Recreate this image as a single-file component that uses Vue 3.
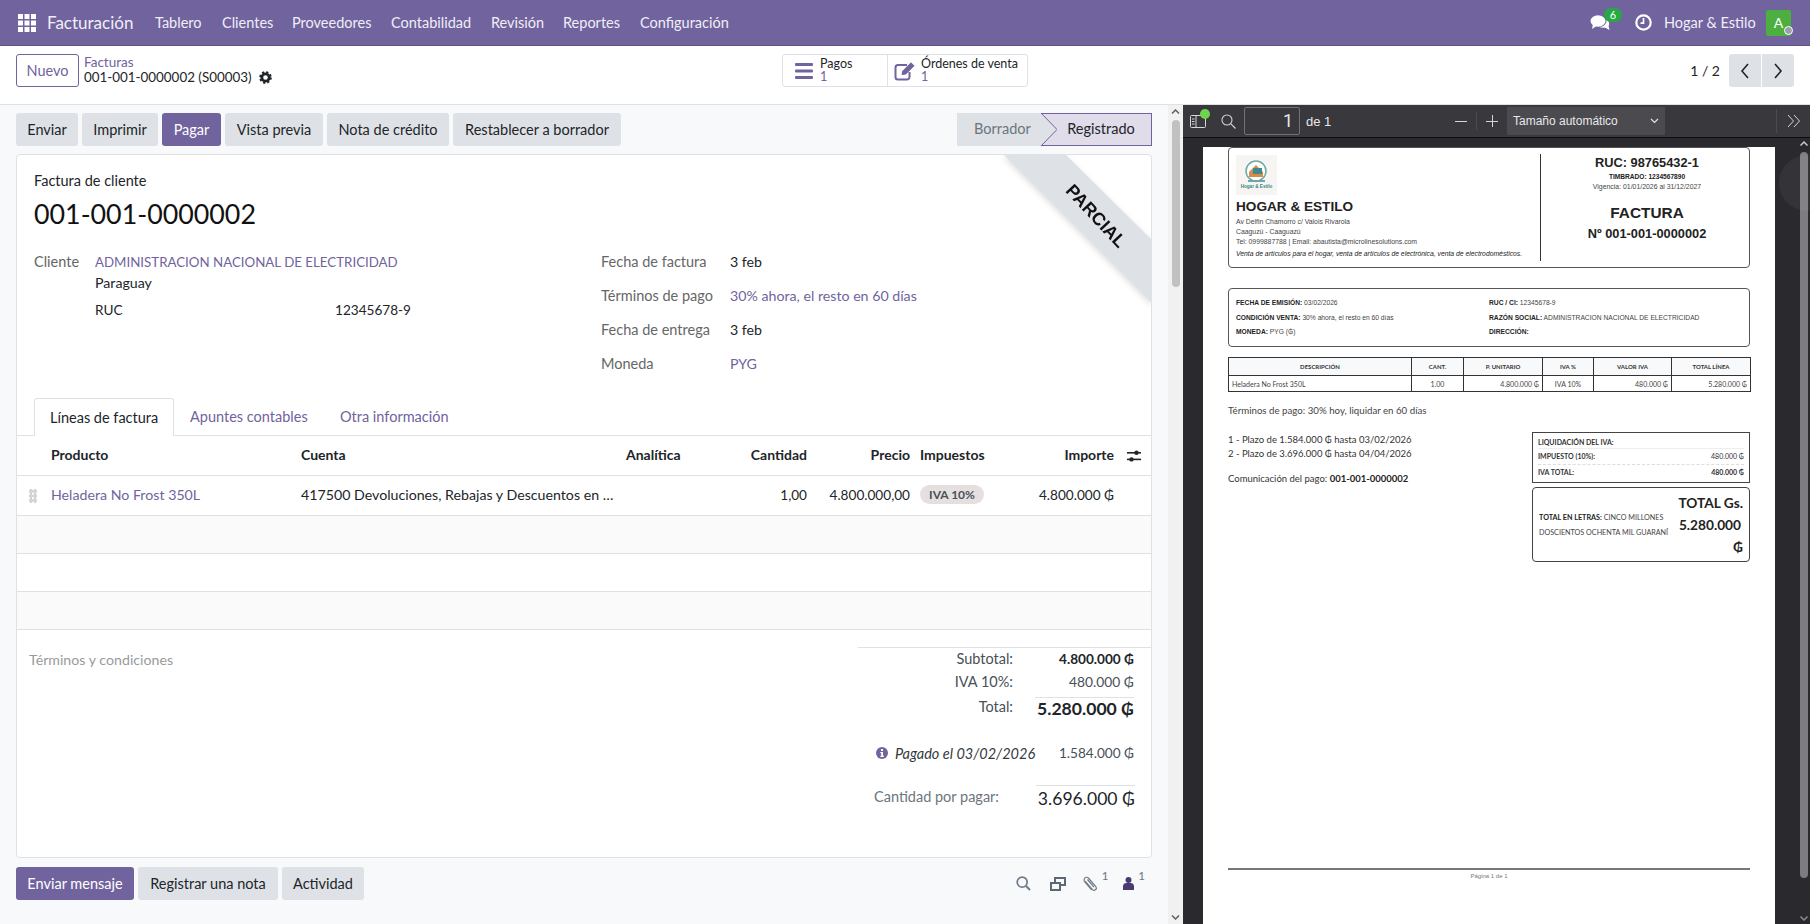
<script setup>
const menus = ['Tablero', 'Clientes', 'Proveedores', 'Contabilidad', 'Revisión', 'Reportes', 'Configuración']
const actions = [
  { label: 'Enviar', w: 62 },
  { label: 'Imprimir', w: 76 },
  { label: 'Pagar', w: 59, primary: true },
  { label: 'Vista previa', w: 98 },
  { label: 'Nota de crédito', w: 122 },
  { label: 'Restablecer a borrador', w: 168 },
]
const infoRows = [
  { label: 'Fecha de factura', value: '3 feb' },
  { label: 'Términos de pago', value: '30% ahora, el resto en 60 días', link: true },
  { label: 'Fecha de entrega', value: '3 feb' },
  { label: 'Moneda', value: 'PYG', link: true },
]
</script>

<template>
  <div class="app">
    <header class="navbar">
      <svg class="apps" width="18" height="18" viewBox="0 0 18 18" fill="#fff">
        <rect x="0" y="0" width="5" height="5" /><rect x="6.5" y="0" width="5" height="5" /><rect x="13" y="0" width="5" height="5" />
        <rect x="0" y="6.5" width="5" height="5" /><rect x="6.5" y="6.5" width="5" height="5" /><rect x="13" y="6.5" width="5" height="5" />
        <rect x="0" y="13" width="5" height="5" /><rect x="6.5" y="13" width="5" height="5" /><rect x="13" y="13" width="5" height="5" />
      </svg>
      <span class="brand">Facturación</span>
      <nav class="menu">
        <a v-for="m in menus" :key="m">{{ m }}</a>
      </nav>
      <div class="systray">
        <span class="chat">
          <svg width="20" height="18" viewBox="0 0 20 18" fill="#fff">
            <ellipse cx="8" cy="7" rx="7.5" ry="5.8" />
            <path d="M3 10 L2 15 L8 11 Z" />
            <path d="M16.5 5.5 C19 7 20 9.5 18.6 12 L19.5 16 L15 13.6 C13 14 11 13.8 9.5 13 C13.5 13 17 10 16.5 5.5 Z" />
          </svg>
          <b class="count">6</b>
        </span>
        <svg class="clock" width="17" height="17" viewBox="0 0 17 17" fill="none" stroke="#fff">
          <circle cx="8.5" cy="8.5" r="7.2" stroke-width="2.2" />
          <path d="M8.5 4 V9.2 H5.5" stroke-width="1.7" />
        </svg>
        <span class="company">Hogar &amp; Estilo</span>
        <span class="avatar">A<i class="presence"></i></span>
      </div>
    </header>

    <section class="control">
      <button class="btn-new">Nuevo</button>
      <div class="crumbs">
        <a>Facturas</a>
        <div class="crumb-current">
          001-001-0000002 (S00003)
          <svg width="13" height="13" viewBox="0 0 14 14">
            <circle cx="7" cy="7" r="4" fill="none" stroke="#212529" stroke-width="3" />
            <circle cx="7" cy="7" r="5.8" fill="none" stroke="#212529" stroke-width="2" stroke-dasharray="2.4 2.16" />
          </svg>
        </div>
      </div>
      <div class="stats">
        <div class="stat stat-pay">
          <svg width="18" height="16" viewBox="0 0 18 16" fill="#71639e">
            <rect width="18" height="3" rx="1" /><rect y="6.5" width="18" height="3" rx="1" /><rect y="13" width="18" height="3" rx="1" />
          </svg>
          <div class="stat-text"><span>Pagos</span><em>1</em></div>
        </div>
        <div class="stat stat-order">
          <svg width="22" height="20" viewBox="0 0 22 20" fill="none" stroke="#71639e">
            <path d="M13 4 H4 A2.5 2.5 0 0 0 1.5 6.5 V16 A2.5 2.5 0 0 0 4 18.5 H13 A2.5 2.5 0 0 0 15.5 16 V11" stroke-width="2" />
            <path d="M8 13.5 L8.8 10 L17 1.8 L20 4.8 L11.8 13 Z" fill="#71639e" stroke-width="1" />
          </svg>
          <div class="stat-text"><span>Órdenes de venta</span><em>1</em></div>
        </div>
      </div>
      <div class="pager">
        <span class="pager-count">1 / 2</span>
        <button class="pager-btn">
          <svg width="10" height="16" viewBox="0 0 10 16" fill="none" stroke="#212529" stroke-width="1.6"><path d="M8 1 L2 8 L8 15" /></svg>
        </button>
        <button class="pager-btn">
          <svg width="10" height="16" viewBox="0 0 10 16" fill="none" stroke="#212529" stroke-width="1.6"><path d="M2 1 L8 8 L2 15" /></svg>
        </button>
      </div>
    </section>

    <main class="workspace">
      <div class="form-pane">
        <div class="action-row">
          <div class="actions">
            <button
              v-for="a in actions"
              :key="a.label"
              class="btn"
              :class="{ primary: a.primary }"
              :style="{ width: a.w + 'px' }"
            >{{ a.label }}</button>
          </div>
          <div class="statusbar">
            <span class="status-off">Borrador</span>
            <svg class="status-arrow" width="16" height="33" viewBox="0 0 16 33">
              <path d="M0 0 L16 16.5 L0 33 H16 V0 Z" fill="#e0dcea" />
              <path d="M0 0 L16 16.5 L0 33" fill="none" stroke="#71639e" />
              <path d="M0 .5 H16 M0 32.5 H16" stroke="#71639e" />
            </svg>
            <span class="status-on">Registrado</span>
          </div>
        </div>

        <article class="card">
          <div class="ribbon"><div class="ribbon-band"><span>PARCIAL</span></div></div>
          <div class="kind">Factura de cliente</div>
          <h1 class="number">001-001-0000002</h1>

          <div class="info">
            <div class="info-left">
              <div class="field-label">Cliente</div>
              <div class="partner">
                <a>ADMINISTRACION NACIONAL DE ELECTRICIDAD</a>
                <div>Paraguay</div>
                <div class="ruc"><span>RUC</span><span>12345678-9</span></div>
              </div>
            </div>
            <div class="info-right">
              <div v-for="r in infoRows" :key="r.label" class="info-row">
                <span class="field-label">{{ r.label }}</span>
                <a v-if="r.link">{{ r.value }}</a>
                <span v-else>{{ r.value }}</span>
              </div>
            </div>
          </div>

          <div class="tabs">
            <a class="tab active">Líneas de factura</a>
            <a class="tab">Apuntes contables</a>
            <a class="tab">Otra información</a>
          </div>

          <div class="grid-row grid-head">
            <span>Producto</span>
            <span>Cuenta</span>
            <span>Analítica</span>
            <span class="num">Cantidad</span>
            <span class="num">Precio</span>
            <span class="tax">Impuestos</span>
            <span class="num">Importe</span>
            <svg class="optional" width="14" height="14" viewBox="0 0 14 14" fill="#212529">
              <rect y="3" width="14" height="1.6" /><circle cx="9.5" cy="3.8" r="2.2" />
              <rect y="9.6" width="14" height="1.6" /><circle cx="4.5" cy="10.4" r="2.2" />
            </svg>
          </div>
          <div class="grid-row grid-line">
            <i class="handle"></i>
            <a>Heladera No Frost 350L</a>
            <span class="account">417500 Devoluciones, Rebajas y Descuentos en …</span>
            <span></span>
            <span class="num">1,00</span>
            <span class="num">4.800.000,00</span>
            <span class="tax"><b class="badge">IVA 10%</b></span>
            <span class="num">4.800.000 ₲</span>
          </div>
          <div class="empty-row odd"></div>
          <div class="empty-row"></div>
          <div class="empty-row odd"></div>

          <div class="bottom">
            <div class="terms">Términos y condiciones</div>
            <div class="totals">
              <div class="total-row"><span>Subtotal:</span><b>4.800.000 ₲</b></div>
              <div class="total-row"><span>IVA 10%:</span><span class="amount">480.000 ₲</span></div>
              <div class="total-row grand"><span>Total:</span><b>5.280.000 ₲</b></div>
              <div class="paid">
                <svg width="12" height="12" viewBox="0 0 12 12">
                  <circle cx="6" cy="6" r="6" fill="#71639e" />
                  <rect x="5" y="2" width="2" height="2" fill="#fff" />
                  <path d="M4.4 5 H7 V8.8 H7.8 V10 H4.4 V8.8 H5.2 V6.2 H4.4 Z" fill="#fff" />
                </svg>
                <em>Pagado el 03/02/2026</em>
                <span>1.584.000 ₲</span>
              </div>
              <div class="due">
                <span>Cantidad por pagar:</span>
                <strong>3.696.000 ₲</strong>
              </div>
            </div>
          </div>
        </article>

        <div class="chatter">
          <button class="btn primary chat-send">Enviar mensaje</button>
          <button class="btn chat-note">Registrar una nota</button>
          <button class="btn chat-act">Actividad</button>
          <div class="chatter-tools">
            <svg class="tool-search" width="15" height="15" viewBox="0 0 15 15" fill="none" stroke="#6c7a89" stroke-width="1.7">
              <circle cx="6.2" cy="6.2" r="5" /><path d="M10 10 L14 14" stroke-width="2" />
            </svg>
            <svg class="tool-copy" width="16" height="14" viewBox="0 0 16 14" fill="none" stroke="#5c6878" stroke-width="2">
              <rect x="1" y="6" width="9" height="7" /><path d="M5 5 V1 H15 V8 H11" />
            </svg>
            <svg class="tool-clip" width="16" height="16" viewBox="0 0 16 16" fill="none" stroke="#6f7b8a" stroke-width="1.2">
              <path d="M3.2 5.2 L10.4 13.6 A2.3 2.3 0 0 0 14 10.8 L6.4 2 A2.5 2.5 0 0 0 2.4 2.6 A2.6 2.6 0 0 0 2.6 5.6 L9.6 13.8" />
              <path d="M5.5 3.5 L12 11.2" />
            </svg>
            <sup>1</sup>
            <svg class="tool-user" width="11" height="13" viewBox="0 0 11 13" fill="#4a3b74">
              <circle cx="5.5" cy="3" r="3" /><path d="M0 13 V9 A3.5 3.5 0 0 1 3.5 6 H7.5 A3.5 3.5 0 0 1 11 9 V13 Z" />
            </svg>
            <sup>1</sup>
          </div>
        </div>
      </div>

      <div class="pane-scroll">
        <svg width="9" height="5" viewBox="0 0 9 5" fill="none" stroke="#606060" stroke-width="1.5"><path d="M1 4.5 L4.5 1 L8 4.5" /></svg>
        <i class="pane-thumb"></i>
        <svg class="pane-down" width="9" height="5" viewBox="0 0 9 5" fill="none" stroke="#606060" stroke-width="1.5"><path d="M1 .5 L4.5 4 L8 .5" /></svg>
      </div>

      <aside class="viewer">
        <div class="pdf-tools">
          <span class="pdf-side">
            <svg width="16" height="16" viewBox="0 0 16 16" fill="none" stroke="#d6d6d8">
              <rect x=".5" y="2.5" width="15" height="12" rx="1" /><path d="M6 2.5 V14.5 M2 6 H4.5 M2 8.5 H4.5 M2 11 H4.5" />
            </svg>
            <i class="pdf-dot"></i>
          </span>
          <svg class="pdf-search" width="15" height="15" viewBox="0 0 15 15" fill="none" stroke="#d6d6d8" stroke-width="1.1">
            <circle cx="6" cy="6" r="5" /><path d="M9.6 9.6 L14.5 14.5" />
          </svg>
          <span class="pdf-page">1</span>
          <span class="pdf-of">de 1</span>
          <svg class="pdf-minus" width="12" height="12" viewBox="0 0 12 12" stroke="#d6d6d8"><path d="M0 6.5 H12" /></svg>
          <i class="pdf-sep"></i>
          <svg class="pdf-plus" width="12" height="12" viewBox="0 0 12 12" stroke="#d6d6d8"><path d="M0 6.5 H12 M6.5 0 V12" /></svg>
          <span class="pdf-zoom">
            Tamaño automático
            <svg width="9" height="6" viewBox="0 0 9 6" fill="none" stroke="#e4e4e6" stroke-width="1.2"><path d="M1 1 L4.5 4.5 L8 1" /></svg>
          </span>
          <i class="pdf-sep2"></i>
          <svg class="pdf-more" width="14" height="14" viewBox="0 0 14 14" fill="none" stroke="#d6d6d8"><path d="M1 1 L6.5 7 L1 13 M7 1 L12.5 7 L7 13" /></svg>
        </div>

        <div class="pdf-body">
          <div class="sheet">
            <div class="doc-head">
              <div class="doc-company">
                <svg class="logo" width="41" height="40" viewBox="0 0 41 40">
                  <rect width="41" height="40" fill="#f7f5f2" />
                  <circle cx="20" cy="16" r="10" fill="#fff" stroke="#6da8a6" stroke-width="1.5" />
                  <path d="M13 17 L20 10 L27 17 V22 H13 Z" fill="#d98a4d" />
                  <rect x="17" y="13" width="9" height="6" fill="#3f8a8c" />
                  <rect x="12" y="25" width="17" height="2" fill="#6da8a6" />
                  <text x="20.5" y="33" font-size="4.6" font-weight="700" text-anchor="middle" fill="#38858a" font-family="Liberation Sans">Hogar &amp; Estilo</text>
                </svg>
                <div class="doc-name">HOGAR &amp; ESTILO</div>
                <div class="doc-line first">Av Delfin Chamorro c/ Valois Rivarola</div>
                <div class="doc-line">Caaguzú - Caaguazú</div>
                <div class="doc-line">Tel: 0999887788 | Email: abautista@microlinesolutions.com</div>
                <div class="doc-slogan">Venta de artículos para el hogar, venta de artículos de electrónica, venta de electrodomésticos.</div>
              </div>
              <div class="doc-fiscal">
                <div class="doc-ruc">RUC: 98765432-1</div>
                <div class="doc-timbrado">TIMBRADO: 1234567890</div>
                <div class="doc-vigencia">Vigencia: 01/01/2026 al 31/12/2027</div>
                <div class="doc-title">FACTURA</div>
                <div class="doc-no">Nº 001-001-0000002</div>
              </div>
            </div>

            <div class="doc-client">
              <div><b>FECHA DE EMISIÓN:</b> 03/02/2026</div>
              <div><b>RUC / CI:</b> 12345678-9</div>
              <div><b>CONDICIÓN VENTA:</b> 30% ahora, el resto en 60 días</div>
              <div><b>RAZÓN SOCIAL:</b> ADMINISTRACION NACIONAL DE ELECTRICIDAD</div>
              <div><b>MONEDA:</b> PYG (₲)</div>
              <div><b>DIRECCIÓN:</b></div>
            </div>

            <table class="doc-table">
              <colgroup>
                <col style="width: 183px" /><col style="width: 52px" /><col style="width: 79px" />
                <col style="width: 51px" /><col style="width: 78px" /><col style="width: 79px" />
              </colgroup>
              <thead>
                <tr><th>DESCRIPCIÓN</th><th>CANT.</th><th>P. UNITARIO</th><th>IVA %</th><th>VALOR IVA</th><th>TOTAL LÍNEA</th></tr>
              </thead>
              <tbody>
                <tr>
                  <td>Heladera No Frost 350L</td>
                  <td class="c">1.00</td>
                  <td class="r">4.800.000 ₲</td>
                  <td class="c">IVA 10%</td>
                  <td class="r">480.000 ₲</td>
                  <td class="r">5.280.000 ₲</td>
                </tr>
              </tbody>
            </table>

            <p class="doc-terms">Términos de pago: 30% hoy, liquidar en 60 días</p>

            <div class="doc-bottom">
              <div class="doc-plan">
                <div>1 - Plazo de 1.584.000 ₲ hasta 03/02/2026</div>
                <div>2 - Plazo de 3.696.000 ₲ hasta 04/04/2026</div>
                <div class="doc-comm">Comunicación del pago: <b>001-001-0000002</b></div>
              </div>
              <div class="doc-sums">
                <div class="doc-tax">
                  <div class="tax-head">LIQUIDACIÓN DEL IVA:</div>
                  <div class="tax-row dashed"><b>IMPUESTO (10%):</b><span>480.000 ₲</span></div>
                  <div class="tax-row"><b>IVA TOTAL:</b><b>480.000 ₲</b></div>
                </div>
                <div class="doc-total">
                  <div class="words"><b>TOTAL EN LETRAS:</b> CINCO MILLONES DOSCIENTOS OCHENTA MIL GUARANÍ</div>
                  <div class="big">
                    <div>TOTAL Gs.</div>
                    <div>5.280.000</div>
                    <div>₲</div>
                  </div>
                </div>
              </div>
            </div>

            <div class="doc-foot">Página 1 de 1</div>
          </div>

          <div class="pdf-scroll">
            <svg width="8" height="5" viewBox="0 0 8 5" fill="none" stroke="#c8c8c8" stroke-width="1.5"><path d="M.5 4.5 L4 1 L7.5 4.5" /></svg>
            <i class="pdf-thumb"></i>
            <svg class="pdf-down" width="8" height="5" viewBox="0 0 8 5" fill="none" stroke="#8a8a8a" stroke-width="1.5"><path d="M.5 .5 L4 4 L7.5 .5" /></svg>
          </div>
          <div class="floating"></div>
        </div>
      </aside>
    </main>
  </div>
</template>

<style>
html, body { margin: 0; background: #f8f9fa; }
</style>

<style scoped>
.app {
  width: 1810px;
  height: 924px;
  overflow: hidden;
  display: flex;
  flex-direction: column;
  font-family: "Lato", "DejaVu Sans", sans-serif;
  font-size: 14.5px;
  color: #212529;
  background: #f8f9fa;
}
a { color: #71639e; }
button { font: inherit; border: 0; padding: 0; color: inherit; }

/* navbar */
.navbar {
  height: 46px;
  flex: none;
  display: flex;
  align-items: center;
  background: #71639e;
  color: #fff;
  border-bottom: 1px solid #5f5388;
  box-sizing: border-box;
}
.apps { margin-left: 18px; }
.brand { margin-left: 11px; width: 108px; font-size: 17px; color: #f0eef6; }
.menu { display: flex; }
.menu a { color: #f0eef6; margin-right: 20px; }
.menu a:nth-child(1) { width: 47px; }
.menu a:nth-child(2) { width: 50px; }
.menu a:nth-child(3) { width: 80px; margin-right: 19px; }
.menu a:nth-child(4) { width: 80px; }
.menu a:nth-child(5) { width: 52px; }
.menu a:nth-child(6) { width: 57px; }
.systray { margin-left: auto; display: flex; align-items: center; padding-right: 19px; }
.chat { position: relative; width: 45px; display: flex; }
.count {
  position: absolute;
  left: 14px;
  top: -6px;
  width: 18px;
  height: 14px;
  border-radius: 7px;
  background: #28a745;
  font-size: 11px;
  font-weight: 400;
  line-height: 14px;
  text-align: center;
}
.clock { margin-right: 12px; }
.company { width: 102px; color: #f0eef6; }
.avatar {
  position: relative;
  width: 25px;
  height: 26px;
  background: #4caf3f;
  border-radius: 2px;
  text-align: center;
  line-height: 26px;
  font-size: 14px;
}
.presence {
  position: absolute;
  right: -2px;
  bottom: 1px;
  width: 7px;
  height: 7px;
  border: 1.5px solid #fff;
  border-radius: 50%;
  background: #9aa0a6;
}

/* control panel */
.control {
  height: 59px;
  flex: none;
  box-sizing: border-box;
  background: #fff;
  border-bottom: 1px solid #dee2e6;
  display: flex;
  align-items: flex-start;
  padding: 8px 16px 0;
}
.btn-new {
  width: 63px;
  height: 33px;
  background: #fff;
  border: 1px solid #71639e;
  border-radius: 3px;
  color: #71639e;
}
.crumbs { margin-left: 5px; width: 698px; line-height: 15px; font-size: 14px; padding-top: 1px; }
.crumbs a { display: block; font-size: 13.5px; }
.crumb-current { display: flex; align-items: center; gap: 7px; font-size: 13.4px; }
.stats {
  display: flex;
  width: 246px;
  height: 33px;
  box-sizing: border-box;
  border: 1px solid #dee2e6;
  border-radius: 3px;
  font-size: 12.5px;
}
.stat { display: flex; align-items: center; box-sizing: border-box; }
.stat-pay { width: 105px; padding-left: 12px; gap: 7px; border-right: 1px solid #dee2e6; }
.stat-order { padding-left: 6px; gap: 5px; }
.stat-text { display: flex; flex-direction: column; line-height: 12.5px; }
.stat-text em { font-style: normal; color: #71639e; }
.pager { margin-left: auto; display: flex; align-items: center; height: 33px; }
.pager-count { margin-right: 8px; font-size: 14px; }
.pager-btn {
  width: 32px;
  height: 33px;
  margin-left: 1px;
  background: #dee2e6;
  display: flex;
  align-items: center;
  justify-content: center;
}
.pager-btn:first-of-type { border-radius: 3px 0 0 3px; }
.pager-btn:last-of-type { border-radius: 0 3px 3px 0; }

/* workspace */
.workspace { flex: 1; min-height: 0; display: flex; }
.form-pane { width: 1168px; flex: none; box-sizing: border-box; padding: 8px 16px 0; }
.action-row { display: flex; justify-content: space-between; height: 33px; }
.actions { display: flex; gap: 4px; }
.btn { height: 33px; padding-bottom: 1px; background: #dee2e6; border-radius: 3px; color: #212529; }
.btn.primary { background: #71639e; color: #fff; }
.statusbar { display: flex; width: 195px; height: 33px; background: #dee2e6; }
.status-off { width: 84px; padding-left: 17px; box-sizing: border-box; line-height: 32px; color: #6c757d; }
.status-arrow { flex: none; }
.status-on {
  flex: 1;
  text-align: center;
  padding-right: 6px;
  background: #e0dcea;
  line-height: 30px;
  border: 1px solid #71639e;
  border-left: 0;
}

.card {
  position: relative;
  height: 704px;
  margin-top: 8px;
  box-sizing: border-box;
  background: #fff;
  border: 1px solid #dee2e6;
  border-radius: 4px;
  padding-top: 16px;
  overflow: hidden;
}
.ribbon {
  position: absolute;
  right: -1px;
  top: -1px;
  width: 149px;
  height: 149px;
  filter: drop-shadow(0 3px 3px rgba(0, 0, 0, .12));
}
.ribbon-band {
  position: relative;
  width: 100%;
  height: 100%;
  clip-path: polygon(0 0, 62px 0, 100% 86px, 100% 149px);
  background: #dee2e6;
}
.ribbon span {
  position: absolute;
  left: 43px;
  top: 52px;
  width: 100px;
  text-align: center;
  transform: rotate(47deg);
  font: 700 18px/20px "Liberation Sans", sans-serif;
  color: #111;
}
.kind { margin-left: 17px; line-height: 20px; }
.number { margin: 5px 0 0 17px; font-weight: 400; font-size: 26.8px; line-height: 36px; color: #111; }
.info { display: flex; margin-top: 20px; height: 122px; padding-left: 17px; font-size: 14.2px; }
.info-left { display: flex; width: 567px; line-height: 20px; }
.info-left > .field-label { width: 61px; }
.partner { width: 370px; }
.partner a { font-size: 13.3px; }
.partner > div:nth-child(2) { margin-top: 1px; }
.ruc { display: flex; margin-top: 7px; font-size: 13.6px; }
.ruc span:first-child { width: 240px; }
.field-label { color: #666; font-size: 14.5px; }
.info-right { display: flex; flex-direction: column; gap: 14px; line-height: 20px; }
.info-row { display: flex; }
.info-row .field-label { width: 129px; }

.tabs { display: flex; margin-top: 24px; padding-left: 17px; height: 38px; box-sizing: border-box; border-bottom: 1px solid #dee2e6; }
.tab { line-height: 37px; padding-left: 16px; width: 150px; box-sizing: border-box; }
.tab.active {
  width: 140px;
  height: 38px;
  color: #212529;
  background: #fff;
  border: 1px solid #dee2e6;
  border-bottom: 0;
  border-radius: 3px 3px 0 0;
  padding-left: 15px;
}
.grid-row {
  position: relative;
  display: grid;
  grid-template-columns: 250px 325px 90px 91px 103px 120px 84px;
  padding: 0 0 2px 34px;
  align-items: center;
  box-sizing: border-box;
  border-bottom: 1px solid #dee2e6;
  white-space: nowrap;
}
.grid-head { height: 40px; font-weight: 700; font-size: 14px; color: #212529; }
.grid-line { height: 40px; font-size: 14.2px; }
.grid-line .num { font-size: 13.6px; }
.num { text-align: right; }
.tax { padding-left: 10px; }
.account { overflow: hidden; }
.optional { position: absolute; left: 1110px; top: 13px; }
.handle {
  position: absolute;
  left: 12px;
  top: 13px;
  width: 8px;
  height: 14px;
  background-image: radial-gradient(#d4d4d4 60%, transparent 62%);
  background-size: 4px 4.6px;
}
.badge {
  display: inline-block;
  width: 64px;
  height: 19px;
  border-radius: 10px;
  background: #e5dfdf;
  text-align: center;
  font-size: 12px;
  font-weight: 700;
  line-height: 19px;
  color: #495057;
  vertical-align: middle;
}
.empty-row { height: 38px; box-sizing: border-box; border-bottom: 1px solid #dee2e6; }
.empty-row.odd { background: #fafafb; }

.bottom { display: flex; justify-content: space-between; }
.terms { margin: 20px 0 0 12px; line-height: 20px; color: #9a9a9a; font-size: 14.2px; }
.totals {
  width: 293px;
  margin-top: 17px;
  box-sizing: border-box;
  padding-right: 17px;
  border-top: 1px solid #dee2e6;
  color: #495057;
}
.total-row { display: grid; grid-template-columns: 155px 121px; height: 23px; padding-bottom: 2px; box-sizing: border-box; align-items: center; text-align: right; white-space: nowrap; }
.total-row b { color: #212529; font-size: 13.6px; }
.total-row .amount { font-size: 13.8px; }
.total-row.grand { height: 28px; padding-bottom: 0; margin-top: 3px; }
.grand span { align-self: start; line-height: 20px; }
.total-row.grand b {
  margin-left: 22px;
  height: 28px;
  line-height: 21px;
  border-top: 1px solid #dee2e6;
  font-size: 17.6px;
}
.paid { display: flex; align-items: center; height: 20px; margin-top: 18px; padding-left: 18px; gap: 7px; }
.paid span { margin-left: auto; font-size: 13.6px; }
.paid em { color: #343a40; }
.due { display: flex; margin-top: 22px; padding-left: 16px; }
.due span { padding-top: 2px; line-height: 20px; color: #6c757d; width: 162px; flex: none; }
.due strong {
  flex: 1;
  margin-right: -1px;
  border-top: 1px solid #dee2e6;
  text-align: right;
  white-space: nowrap;
  font-weight: 400;
  font-size: 17.6px;
  line-height: 26px;
  color: #212529;
}

.chatter { display: flex; gap: 4px; margin-top: 9px; position: relative; }
.chat-send { width: 118px; }
.chat-note { width: 140px; }
.chat-act { width: 82px; }
.chatter-tools { display: flex; align-items: center; margin-left: auto; height: 33px; padding-right: 7px; font-size: 12px; color: #6c757d; }
.chatter-tools sup { align-self: flex-start; margin: 2px 0 0 4px; font-size: 11.5px; line-height: 14px; }
.tool-copy { margin-left: 19px; }
.tool-clip { margin-left: 16px; }
.tool-user { margin-left: 15px; }

.pane-scroll { position: relative; width: 15px; flex: none; background: #f1f1f1; display: flex; flex-direction: column; align-items: center; padding-top: 4px; box-sizing: border-box; }
.pane-thumb { display: block; width: 8px; height: 167px; margin-top: 6px; background: #c1c1c1; border-radius: 4px; }
.pane-down { position: absolute; bottom: 4px; }

/* pdf viewer */
.viewer { flex: 1; min-width: 0; display: flex; flex-direction: column; background: #2a2a2e; font-family: "Liberation Sans", sans-serif; }
.pdf-tools {
  height: 32px;
  flex: none;
  display: flex;
  align-items: center;
  background: #38383d;
  color: #e8e8ea;
  font-size: 12px;
  box-shadow: 0 1px 0 #0c0c0d;
}
.pdf-side { position: relative; margin-left: 7px; display: flex; }
.pdf-dot { position: absolute; left: 10px; top: -4px; width: 10px; height: 10px; border-radius: 50%; background: #6fd34d; }
.pdf-search { margin-left: 15px; }
.pdf-page {
  width: 56px;
  height: 28px;
  margin-left: 8px;
  box-sizing: border-box;
  border: 1px solid #737373;
  border-radius: 2px;
  padding-right: 6px;
  text-align: right;
  font: 18px/26px "Roboto", sans-serif;
}
.pdf-of { margin-left: 6px; width: 149px; font-size: 13px; }
.pdf-sep { width: 1px; height: 18px; margin: 0 9px; background: #4a4a4f; }
.pdf-zoom {
  display: flex;
  align-items: center;
  justify-content: space-between;
  width: 158px;
  height: 28px;
  margin-left: 9px;
  box-sizing: border-box;
  padding: 0 6px;
  background: #4a4a4f;
}
.pdf-sep2 { width: 1px; height: 24px; margin-left: 111px; background: #4a4a4f; }
.pdf-more { margin-left: 10px; }
.pdf-body { position: relative; flex: 1; min-height: 0; padding-top: 10px; }

.sheet {
  width: 572px;
  height: 780px;
  margin-left: 20px;
  box-sizing: border-box;
  padding: 0 25px;
  background: #fff;
  color: #222;
  font-size: 6.85px;
}
.doc-head { display: flex; height: 121px; box-sizing: border-box; border: 1px solid #555; border-radius: 4px; }
.doc-company { width: 312px; height: 107px; margin-top: 6px; box-sizing: border-box; padding: 1px 0 0 7px; border-right: 1px solid #333; }
.logo { display: block; }
.doc-name { margin-top: 4px; font: 700 13.6px/16px "Liberation Sans", sans-serif; color: #222; }
.doc-line { line-height: 10px; color: #444; }
.doc-line.first { margin-top: 2px; }
.doc-slogan { margin-top: 2px; line-height: 10px; font-style: italic; font-size: 6.8px; white-space: nowrap; }
.doc-fiscal { flex: 1; text-align: center; padding: 7px 0 0 4px; }
.doc-ruc { font: 700 12.8px/16px "Liberation Sans", sans-serif; }
.doc-timbrado { margin-top: 1px; font-size: 6.6px; font-weight: 700; line-height: 10px; }
.doc-vigencia { font-size: 6.9px; line-height: 10px; color: #444; }
.doc-title { margin-top: 10px; font: 700 15.4px/22px "Liberation Sans", sans-serif; }
.doc-no { margin-top: 2px; font: 700 12.8px/16px "Liberation Sans", sans-serif; }
.doc-client {
  display: grid;
  grid-template-columns: 253px 1fr;
  align-content: start;
  row-gap: 4.5px;
  height: 59px;
  margin-top: 20px;
  box-sizing: border-box;
  padding: 9px 0 0 7px;
  border: 1px solid #555;
  border-radius: 4px;
  font-size: 6.7px;
  line-height: 10px;
  color: #444;
}
.doc-client b { color: #222; }
.doc-table {
  width: 522px;
  margin-top: 10px;
  border-collapse: collapse;
  table-layout: fixed;
  font-family: "Lato", "DejaVu Sans", sans-serif;
}
.doc-table th, .doc-table td { border: 1px solid #333; padding: 0 3px; }
.doc-table th { height: 17px; background: #f8f9fa; font-size: 6px; color: #333; }
.doc-table td { height: 15px; font-size: 7px; color: #444; white-space: nowrap; }
.doc-table .c { text-align: center; }
.doc-table .r { text-align: right; }
.doc-terms { margin: 11px 0 0; font: 9.7px/14px "Lato", "DejaVu Sans", sans-serif; color: #444; }
.doc-bottom { display: flex; justify-content: space-between; margin-top: 15px; font-family: "Lato", "DejaVu Sans", sans-serif; }
.doc-plan { padding-top: 1px; font-size: 9.5px; line-height: 14px; color: #333; }
.doc-plan > div { height: 14px; overflow: hidden; }
.doc-comm { margin-top: 11px; }
.doc-comm b { color: #222; }
.doc-sums { width: 218px; }
.doc-tax { height: 51px; box-sizing: border-box; border: 1px solid #444; padding: 4px 5px 0; font-size: 7px; color: #333; }
.tax-head { height: 11px; line-height: 11px; font-weight: 700; border-bottom: 1px solid #eee; }
.tax-row { display: flex; justify-content: space-between; height: 15px; line-height: 15px; }
.tax-row.dashed { border-bottom: 1px dashed #ddd; }
.doc-total {
  display: flex;
  align-items: center;
  height: 75px;
  margin-top: 4px;
  box-sizing: border-box;
  border: 1px solid #444;
  border-radius: 4px;
  padding: 0 6px;
}
.words { width: 130px; flex: none; font-size: 7.2px; line-height: 15px; color: #444; }
.words b { color: #222; }
.big { flex: 1; text-align: right; font-size: 13.7px; font-weight: 700; line-height: 22px; color: #222; padding-top: 1px; }
.big div:nth-child(2) { padding-right: 2px; }
.doc-foot {
  margin-top: 306px;
  border-top: 2px solid #777;
  padding-top: 3px;
  text-align: center;
  font-size: 6px;
  color: #777;
}
.pdf-scroll { position: absolute; right: 0; top: 0; bottom: 0; width: 13px; display: flex; flex-direction: column; align-items: center; padding-top: 4px; box-sizing: border-box; }
.pdf-thumb { display: block; width: 8px; height: 726px; margin-top: 6px; background: #7d7d7f; border-radius: 4px; }
.pdf-down { position: absolute; bottom: 3px; }
.floating { position: absolute; left: 596px; top: 18px; width: 56px; height: 56px; border-radius: 50%; background: rgba(255, 255, 255, .05); }
</style>
